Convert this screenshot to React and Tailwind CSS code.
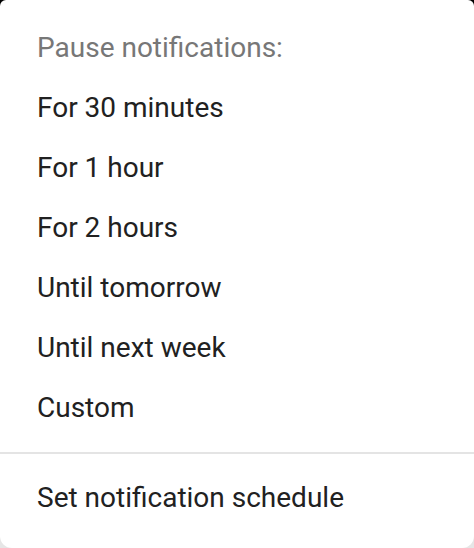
const options = [
  'For 30 minutes',
  'For 1 hour',
  'For 2 hours',
  'Until tomorrow',
  'Until next week',
  'Custom',
];

export default function App() {
  return (
    <div className="w-[474px] h-[548px] bg-[linear-gradient(to_bottom,#000_0,#000_20px,#e6e6e6_20px)]">
      <div
        className="w-full h-full bg-white rounded-t-[6px] rounded-b-[12px] flex flex-col pt-[18px] text-[28px] leading-none text-[#212121]"
        style={{ fontFamily: 'Roboto, "Noto Sans", sans-serif' }}
      >
        <div className="h-[60px] flex items-center pl-[37px] text-[#777777]">Pause notifications:</div>
        {options.map((o) => (
          <div key={o} className="h-[60px] flex items-center pl-[37px]">
            {o}
          </div>
        ))}
        <div className="h-[2px] bg-[#e4e4e4] mt-[14px]" />
        <div className="h-[86px] flex items-center pl-[37px] pt-[2px]">Set notification schedule</div>
      </div>
    </div>
  );
}
